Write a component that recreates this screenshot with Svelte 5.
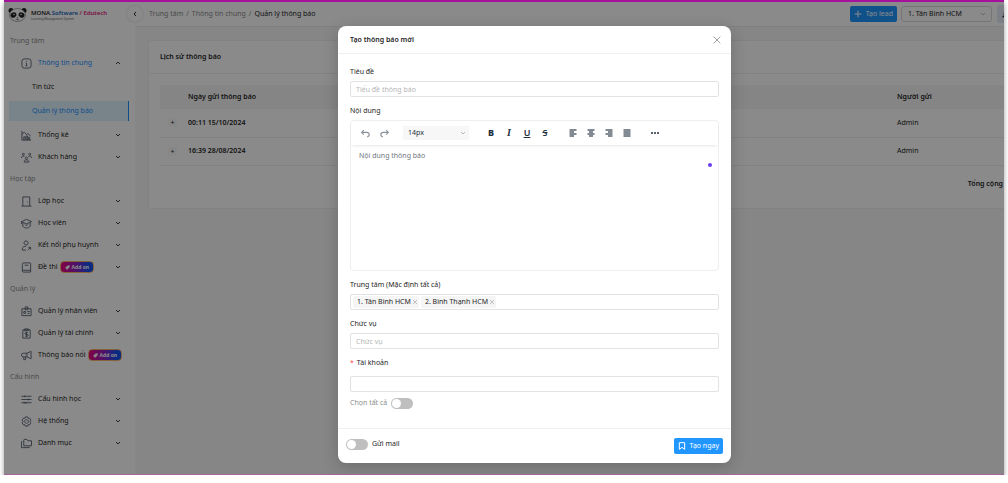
<script>
  const groups = [
    {
      label: 'Trung tâm',
      items: [
        {
          name: 'Thông tin chung',
          icon: 'info',
          open: true,
          children: [{ name: 'Tin tức' }, { name: 'Quản lý thông báo', active: true }],
        },
        { name: 'Thống kê', icon: 'chart' },
        { name: 'Khách hàng', icon: 'users' },
      ],
    },
    {
      label: 'Học tập',
      items: [
        { name: 'Lớp học', icon: 'door' },
        { name: 'Học viên', icon: 'cap' },
        { name: 'Kết nối phụ huynh', icon: 'parent' },
        { name: 'Đề thi', icon: 'book', addon: true },
      ],
    },
    {
      label: 'Quản lý',
      items: [
        { name: 'Quản lý nhân viên', icon: 'badge' },
        { name: 'Quản lý tài chính', icon: 'money' },
        { name: 'Thông báo nổi', icon: 'horn', addon: true, leaf: true },
      ],
    },
    {
      label: 'Cấu hình',
      items: [
        { name: 'Cấu hình học', icon: 'sliders' },
        { name: 'Hệ thống', icon: 'gear' },
        { name: 'Danh mục', icon: 'folders' },
      ],
    },
  ];

  const icons = {
    info: 'M7 2h10a5 5 0 0 1 5 5v10a5 5 0 0 1-5 5H7a5 5 0 0 1-5-5V7a5 5 0 0 1 5-5zM10.500 11H12v6M10 17h4M12 7v1.500',
    chart: 'M2 2v20h20M6 22v-7h3v7M11 22v-9h3v9M16 22v-6h3v6M2 9l5-4 5 5 3-2 6 5',
    users: 'M12 11a2.500 2.500 0 1 0 .1 0zM7 22c0-3 2-5 5-5s5 2 5 5zM5 3a2 2 0 1 0 .1 0zM19 3a2 2 0 1 0 .1 0zM1 13c0-3 2-4 4-4s2 0 3 1M23 13c0-3-2-4-4-4s-2 0-3 1',
    door: 'M1 22h22M4 22V2h15v20M14 12v2',
    cap: 'M12 3 1 8l11 5 11-5zM4 10v8c3 5 13 5 16 0v-8M1 8v5M9 14l3 3 3-3',
    parent: 'M11 2a4.500 4.500 0 1 0 .1 0zM3 22v-3c0-4 3-5 8-5M3 22h8M15 22l6-6M16 16h5v5',
    book: 'M6 2h14a1 1 0 0 1 1 1v19H5a2 2 0 0 1-2-2V5a3 3 0 0 1 3-3zM3 18h18M8 7h8',
    badge: 'M2 6h20v15H2zM9 2h6v6H9zM6 12h4v4H6zM14 12h5M14 16h5',
    money: 'M4 4h16v18H4zM8 2h8v4H8zM14.500 10h-4a1.500 1.500 0 0 0 0 4h3a1.500 1.500 0 0 1 0 4h-4M12 8.500v11',
    horn: 'M22 3v16l-9-4H5a4 4 0 0 1 0-8h8zM13 7v8M6 15v6h4v-6M9 11h1',
    sliders: 'M1 5h22M1 12h22M1 19h22M8 3v4M16 10v4M7 17v4M11 17v4',
    gear: 'M12 8a4 4 0 1 0 .1 0zM9.500 2h5l1 3 3-.5 3 4.500-2 3 2 3-3 4.500-3-.5-1 3h-5l-1-3-3 .5-3-4.500 2-3-2-3 3-4.500 3 .5z',
    folders: 'M8 3h5l2 3h8v11H6V5a2 2 0 0 1 2-2zM3 8H1v13h17v-2',
  };

  const rows = [
    { time: '00:11 15/10/2024', sender: 'Admin' },
    { time: '16:39 28/08/2024', sender: 'Admin' },
  ];

  const formats = ['B', 'I', 'U', 'S'];
  const aligns = [
    { name: 'Left', d: 'M1 2h14M1 6h9M1 10h14M1 14h9' },
    { name: 'Center', d: 'M1 2h14M4 6h8M1 10h14M4 14h8' },
    { name: 'Right', d: 'M1 2h14M6 6h9M1 10h14M6 14h9' },
    { name: 'Justify', d: 'M1 2h14M1 6h14M1 10h14M1 14h14' },
  ];

  let centers = $state(['1. Tân Bình HCM', '2. Bình Thạnh HCM']);
  let title = $state('');
  let content = $state('');
</script>

{#snippet chevron(dir)}
  <svg class="chevron" viewBox="0 0 12 12" aria-hidden="true">
    <path d={dir === 'up' ? 'M2 8l4-4 4 4' : dir === 'left' ? 'M8 2L4 6l4 4' : 'M2 4l4 4 4-4'} />
  </svg>
{/snippet}

<div class="screen">
  <div class="app">
    <aside class="sidebar">
      <div class="logo">
        <svg class="logo__panda" viewBox="0 0 38 30" aria-hidden="true">
          <circle cx="6" cy="7" r="5" fill="#222" />
          <circle cx="32" cy="7" r="5" fill="#222" />
          <ellipse cx="19" cy="16" rx="16" ry="13" fill="#fff" stroke="#555" />
          <ellipse cx="11" cy="16" rx="6" ry="5" fill="#222" transform="rotate(-30 11 16)" />
          <ellipse cx="27" cy="16" rx="6" ry="5" fill="#222" transform="rotate(30 27 16)" />
          <circle cx="12" cy="15" r="1.500" fill="#fff" />
          <circle cx="26" cy="15" r="1.500" fill="#fff" />
          <path d="M17 21h4l-2 2zM15 25q4 3 8 0" fill="#222" />
        </svg>
        <div>
          <div class="logo__name">MONA<b>.Software</b> <i>/ Edutech</i></div>
          <div class="logo__sub">Learning Management System</div>
        </div>
      </div>

      <nav class="menu">
        {#each groups as group}
          <div class="menu__label">{group.label}</div>
          {#each group.items as item}
            <a class="menu__item" class:menu__item--open={item.open} href="#menu">
              <svg class="menu__icon" viewBox="0 0 24 24" aria-hidden="true"><path d={icons[item.icon]} /></svg>
              <span>{item.name}</span>
              {#if item.addon}
                <span class="addon">
                  <svg viewBox="0 0 12 12" aria-hidden="true"><path d="M11 1 6 2 3 5 1 6l2 1-1 3 3-1 1 2 1-2 3-3z" /></svg>
                  Add on
                </span>
              {/if}
              {#if !item.leaf}
                <span class="menu__arrow">{@render chevron(item.open ? 'up' : 'down')}</span>
              {/if}
            </a>
            {#if item.children}
              <div class="submenu">
                {#each item.children as child}
                  <a class="submenu__item" class:submenu__item--active={child.active} href="#menu">{child.name}</a>
                {/each}
              </div>
            {/if}
          {/each}
        {/each}
      </nav>
    </aside>

    <div class="main">
      <header class="topbar">
        <button class="collapse" aria-label="Collapse">{@render chevron('left')}</button>
        <nav class="crumbs">
          <a href="#center">Trung tâm</a><span>/</span><a href="#info">Thông tin chung</a><span>/</span>
          <strong>Quản lý thông báo</strong>
        </nav>
        <button class="btn">
          <svg viewBox="0 0 12 12" aria-hidden="true"><path d="M6 1v10M1 6h10" /></svg>
          Tạo lead
        </button>
        <div class="picker picker--branch">
          <select aria-label="Branch"><option>1. Tân Bình HCM</option></select>
          {@render chevron('down')}
        </div>
        <button class="bell" aria-label="Notifications">
          <svg viewBox="0 0 16 16" aria-hidden="true"><path d="M8 2a4 4 0 0 0-4 4v4l-2 2h12l-2-2V6a4 4 0 0 0-4-4zM6 14h4" /></svg>
        </button>
      </header>

      <section class="card">
        <h2 class="card__title">Lịch sử thông báo</h2>
        <div class="card__body">
          <table>
            <thead>
              <tr><th class="col-plus"></th><th>Ngày gửi thông báo</th><th class="col-sender">Người gửi</th></tr>
            </thead>
            <tbody>
              {#each rows as row}
                <tr>
                  <td class="col-plus"><button class="expand" aria-label="Expand">+</button></td>
                  <td class="time">{row.time}</td>
                  <td class="col-sender">{row.sender}</td>
                </tr>
              {/each}
            </tbody>
          </table>
          <div class="total">Tổng cộng</div>
        </div>
      </section>
    </div>

    <div class="mask">
      <form class="modal" onsubmit={(e) => e.preventDefault()}>
        <div class="modal__header">
          <h1>Tạo thông báo mới</h1>
          <button type="button" class="close" aria-label="Close">
            <svg viewBox="0 0 12 12" aria-hidden="true"><path d="M2 2l8 8M10 2l-8 8" /></svg>
          </button>
        </div>

        <div class="modal__body">
          <div class="field">
            <label for="title">Tiêu đề</label>
            <input id="title" class="input" placeholder="Tiểu đề thông báo" bind:value={title} />
          </div>

          <div class="field">
            <label for="content">Nội dung</label>
            <div class="editor">
              <div class="toolbar">
                <div class="toolbar__group toolbar__group--history">
                  <button type="button" aria-label="Undo">
                    <svg class="arrow" viewBox="0 0 16 16"><path d="M5 2 1 6l4 4M1 6h9c6 0 6 7 1 8" /></svg>
                  </button>
                  <button type="button" aria-label="Redo">
                    <svg class="arrow" viewBox="0 0 16 16"><path d="M11 2l4 4-4 4M15 6H6c-6 0-6 7-1 8" /></svg>
                  </button>
                </div>
                <div class="picker picker--size">
                  <select aria-label="Font size"><option>14px</option></select>
                  {@render chevron('down')}
                </div>
                <div class="toolbar__group toolbar__group--format">
                  {#each formats as f}
                    <button type="button" class="format format--{f}">{f}</button>
                  {/each}
                </div>
                <div class="toolbar__group">
                  {#each aligns as a}
                    <button type="button" aria-label={a.name}>
                      <svg class="align" viewBox="0 0 16 16"><path d={a.d} /></svg>
                    </button>
                  {/each}
                </div>
                <button type="button" class="more" aria-label="More">
                  <svg viewBox="0 0 16 16"><circle cx="2" cy="8" r="2" /><circle cx="8" cy="8" r="2" /><circle cx="14" cy="8" r="2" /></svg>
                </button>
              </div>
              <textarea id="content" placeholder="Nội dung thông báo" bind:value={content}></textarea>
              <span class="editor__dot"></span>
            </div>
          </div>

          <div class="field">
            <label for="centers">Trung tâm (Mặc định tất cả)</label>
            <div class="input tags">
              {#each centers as center}
                <span class="tag">
                  {center}
                  <button type="button" aria-label="Remove" onclick={() => (centers = centers.filter((c) => c !== center))}>
                    <svg viewBox="0 0 12 12" aria-hidden="true"><path d="M2 2l8 8M10 2l-8 8" /></svg>
                  </button>
                </span>
              {/each}
              <input id="centers" />
            </div>
          </div>

          <div class="field">
            <label for="role">Chức vụ</label>
            <input id="role" class="input" placeholder="Chức vụ" />
          </div>

          <div class="field field--account">
            <label for="account"><span class="required">*</span>Tài khoản</label>
            <input id="account" class="input" />
          </div>

          <label class="switch-row switch-row--all">
            Chọn tất cả
            <input type="checkbox" role="switch" class="switch" />
          </label>
        </div>

        <div class="modal__footer">
          <label class="switch-row">
            <input type="checkbox" role="switch" class="switch" />
            Gửi mail
          </label>
          <button class="btn">
            <svg viewBox="0 0 12 12" aria-hidden="true"><path d="M2 1h8v10L6 8l-4 3z" /></svg>
            Tạo ngay
          </button>
        </div>
      </form>
    </div>
  </div>
</div>

<style>
  :global(body) {
    margin: 0;
    background: #fff;
  }

  .screen,
  .screen * {
    box-sizing: border-box;
  }

  .screen {
    margin: 0 4px;
    height: calc(100vh - 8px);
    overflow: hidden;
    border-top: 2px solid #a5109c;
    border-bottom: 1px solid #a9659b;
    box-shadow: 0 3px 5px rgba(0, 0, 0, 0.4);
    font-family: 'Noto Sans', sans-serif;
    font-size: 7px;
    line-height: 12px;
    color: #262626;
  }

  /* the app is wider than the visible window and runs off its right edge */
  .app {
    position: relative;
    display: flex;
    width: calc(100% + 61px);
    height: 100%;
    background: #f8f8f8;
  }

  button,
  input,
  select,
  textarea {
    margin: 0;
    padding: 0;
    border: 0;
    background: none;
    font: inherit;
    color: inherit;
    outline: none;
  }

  a {
    color: inherit;
    text-decoration: none;
  }

  svg {
    display: block;
    flex-shrink: 0;
    fill: none;
    stroke: currentColor;
  }

  .chevron {
    width: 6px;
    height: 6px;
    stroke-width: 2;
  }

  .sidebar {
    width: 131px;
    flex-shrink: 0;
    background: #fff;
  }

  .logo {
    display: flex;
    align-items: center;
    gap: 4px;
    height: 25px;
    padding-left: 4px;
  }

  .logo__panda {
    width: 19px;
    height: 15px;
    stroke: none;
  }

  .logo__name {
    font-size: 6px;
    font-weight: 600;
    line-height: 8px;
    white-space: nowrap;
  }

  .logo__name b {
    font-weight: 600;
    color: #1668c0;
  }

  .logo__name i {
    color: #e0157a;
    font-style: normal;
  }

  .logo__sub {
    font-size: 3px;
    line-height: 4px;
    color: #666;
  }

  .menu {
    padding-top: 3px;
  }

  .menu__label {
    padding-left: 6px;
    line-height: 22px;
    color: #8c8c8c;
  }

  .menu__item {
    display: flex;
    align-items: center;
    height: 22px;
    padding: 0 14px 0 17px;
    white-space: nowrap;
  }

  .menu__item--open > span:not(.menu__arrow) {
    color: #1890ff;
  }

  .menu__icon {
    width: 11px;
    height: 11px;
    margin-right: 6px;
    stroke: #5b6573;
    stroke-width: 2;
  }

  .menu__arrow {
    margin-left: auto;
    color: #434343;
  }

  .submenu {
    display: flex;
    flex-direction: column;
    gap: 4px;
    padding: 3px 6px 3px 5px;
  }

  .submenu__item {
    height: 20px;
    padding-left: 23px;
    line-height: 20px;
  }

  .submenu__item--active {
    background: #e0f2ff;
    border-right: 1px solid #1890ff;
    color: #1890ff;
  }

  .addon {
    display: flex;
    align-items: center;
    gap: 2px;
    height: 12px;
    margin-left: 2px;
    padding: 0 4px;
    border: 1px solid #f5b56a;
    border-radius: 4px;
    background: linear-gradient(90deg, #f0047f, #8a22c8 50%, #1450f0 85%);
    color: #fff;
    font-size: 5px;
    font-weight: 700;
  }

  .addon svg {
    width: 5px;
    height: 5px;
    fill: #fff;
  }

  .main {
    flex: 1;
    min-width: 0;
  }

  .topbar {
    display: flex;
    align-items: center;
    height: 25px;
    padding-right: 50px;
    background: #fff;
    border-bottom: 1px solid #ececec;
  }

  .collapse {
    display: grid;
    place-items: center;
    width: 16px;
    height: 16px;
    margin-left: -8px;
    border-radius: 50%;
    background: #fff;
    box-shadow: 0 0 2px rgba(0, 0, 0, 0.2);
  }

  .crumbs {
    display: flex;
    gap: 3px;
    margin-left: 6px;
    margin-right: auto;
    color: #8c8c8c;
  }

  .crumbs strong {
    font-weight: 400;
    color: #262626;
  }

  .btn {
    display: flex;
    align-items: center;
    justify-content: center;
    gap: 4px;
    height: 16px;
    padding: 0 4px;
    border-radius: 2px;
    background: #2196ff;
    color: #fff;
    white-space: nowrap;
  }

  .btn svg {
    width: 8px;
    height: 8px;
    stroke-width: 1.500;
  }

  .picker {
    display: flex;
    align-items: center;
    height: 16px;
  }

  .picker select {
    flex: 1;
    min-width: 0;
    height: 100%;
    appearance: none;
  }

  .picker .chevron {
    stroke: #a6a6a6;
    stroke-width: 1.500;
  }

  .picker--branch {
    width: 91px;
    margin: 0 5px 0 4px;
    padding: 0 5px 0 6px;
    border: 1px solid #d9d9d9;
    border-radius: 3px;
  }

  .bell {
    display: grid;
    place-items: center;
    width: 18px;
    height: 18px;
    border-radius: 3px;
    background: #e6ebf5;
  }

  .bell svg {
    width: 9px;
    height: 9px;
    stroke-width: 2;
  }

  .card {
    margin: 13px 12px 0 13px;
    background: #fff;
    border: 1px solid #f0f0f0;
    border-radius: 3px;
  }

  .card__title {
    margin: 0;
    padding-left: 11px;
    border-bottom: 1px solid #f0f0f0;
    font-size: 7px;
    font-weight: 600;
    line-height: 32px;
  }

  .card__body {
    padding: 11px 11px 18px;
  }

  table {
    width: 100%;
    border-collapse: collapse;
    text-align: left;
  }

  th {
    height: 24px;
    padding: 0;
    background: #f5f5f5;
    font-weight: 600;
  }

  td {
    height: 28px;
    padding: 0;
    border-bottom: 1px solid #f0f0f0;
  }

  .col-plus {
    width: 28px;
  }

  .col-sender {
    width: 144px;
  }

  .time {
    font-weight: 600;
  }

  .expand {
    display: block;
    width: 9px;
    height: 9px;
    margin-left: 8px;
    border-radius: 2px;
    background: #fafafa;
    line-height: 9px;
  }

  .total {
    padding: 12px 38px 0 0;
    font-weight: 600;
    text-align: right;
  }

  .mask {
    position: absolute;
    inset: 0;
    display: flex;
    justify-content: center;
    align-items: flex-start;
    padding-top: 24px;
    background: rgba(0, 0, 0, 0.46);
  }

  .modal {
    width: 393px;
    border-radius: 8px;
    background: #fff;
    box-shadow: 0 4px 16px rgba(0, 0, 0, 0.2);
  }

  .modal__header {
    display: flex;
    align-items: center;
    justify-content: space-between;
    height: 28px;
    padding: 0 9px 0 12px;
    border-bottom: 1px solid #f0f0f0;
  }

  h1 {
    margin: 0;
    font-size: 7px;
    font-weight: 600;
  }

  .close {
    color: #8c8c8c;
  }

  .close svg {
    width: 10px;
    height: 10px;
  }

  .modal__body {
    padding: 9px 12px 19px;
    border-bottom: 1px solid #f0f0f0;
  }

  .field {
    margin-bottom: 5px;
  }

  .field label {
    display: block;
    line-height: 18px;
  }

  .input {
    display: block;
    width: 100%;
    height: 16px;
    padding: 0 5px;
    border: 1px solid #e2e2e2;
    border-radius: 2px;
  }

  ::placeholder {
    color: #b5b5b5;
    opacity: 1;
  }

  .editor {
    position: relative;
    border: 1px solid #eee;
    border-radius: 4px;
  }

  .toolbar {
    display: flex;
    align-items: center;
    height: 24px;
    padding-left: 8px;
    box-shadow: 0 2px 3px -1px rgba(0, 0, 0, 0.1);
    color: #222f3e;
  }

  .toolbar__group {
    display: flex;
    gap: 6px;
  }

  .toolbar__group button {
    display: grid;
    place-items: center;
    width: 12px;
    height: 14px;
  }

  .toolbar__group--history {
    gap: 7px;
    color: #8b929a;
  }

  .toolbar__group--format {
    margin: 0 16px;
  }

  .toolbar .arrow {
    width: 9px;
    height: 9px;
    stroke-width: 2;
  }

  .toolbar .align {
    width: 8px;
    height: 8px;
    color: #5a6470;
    stroke-width: 3;
  }

  .picker--size {
    width: 66px;
    height: 14px;
    margin-left: 13px;
    padding: 0 3px 0 5px;
    background: #f7f7f7;
  }

  .format {
    font-size: 9px;
    font-weight: 600;
  }

  .format--B {
    font-weight: 800;
  }

  .format--I {
    font-family: 'Liberation Serif', serif;
    font-size: 10px;
    font-style: italic;
  }

  .format--U {
    text-decoration: underline;
  }

  .format--S {
    text-decoration: line-through;
  }

  .more {
    margin-left: 18px;
  }

  .more svg {
    width: 8px;
    height: 8px;
    fill: currentColor;
    stroke: none;
  }

  textarea {
    display: block;
    width: 100%;
    height: 125px;
    padding: 5px 8px;
    resize: none;
  }

  textarea::placeholder {
    color: #6f7680;
  }

  .editor__dot {
    position: absolute;
    top: 42px;
    right: 6px;
    width: 4px;
    height: 4px;
    border-radius: 50%;
    background: #6b3ff2;
  }

  .tags {
    display: flex;
    align-items: center;
    gap: 2px;
    padding: 0 2px;
  }

  .tags input {
    flex: 1;
    min-width: 0;
  }

  .tag {
    display: flex;
    align-items: center;
    gap: 1px;
    height: 12px;
    padding: 0 1px 0 4px;
    border-radius: 2px;
    background: #f5f5f5;
    white-space: nowrap;
  }

  .tag svg {
    width: 6px;
    height: 6px;
    color: #8c8c8c;
  }

  .required {
    margin-right: 3px;
    color: #ff4d4f;
  }

  .field--account label {
    margin-bottom: 4px;
  }

  .switch-row {
    display: flex;
    align-items: center;
    gap: 4px;
    line-height: 12px;
  }

  .switch-row--all {
    color: #8c8c8c;
  }

  .switch {
    width: 22px;
    height: 11px;
    padding: 1px;
    border-radius: 6px;
    background: #bfbfbf;
    appearance: none;
  }

  .switch::before {
    content: '';
    display: block;
    width: 9px;
    height: 9px;
    border-radius: 50%;
    background: #fff;
  }

  .switch:checked {
    background: #2196ff;
  }

  .switch:checked::before {
    margin-left: auto;
  }

  .modal__footer {
    display: flex;
    align-items: flex-start;
    justify-content: space-between;
    padding: 9px 8px;
  }
</style>
